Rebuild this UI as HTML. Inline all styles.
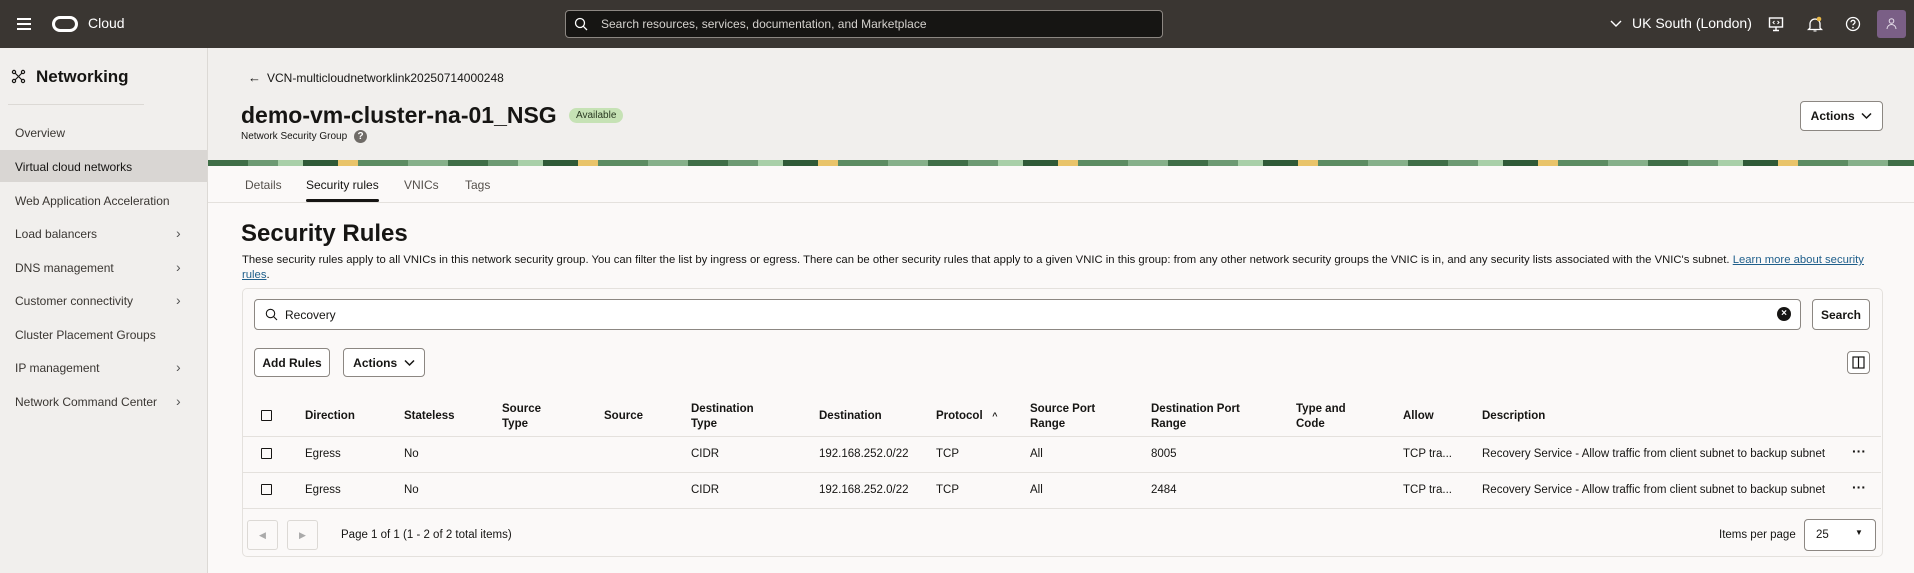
<!DOCTYPE html>
<html><head><meta charset="utf-8"><style>
*{box-sizing:border-box;margin:0;padding:0}
body{width:1914px;height:573px;overflow:hidden;font-family:"Liberation Sans",sans-serif;background:#f1efed;color:#161513;position:relative;font-size:12px}
.a{position:absolute;white-space:nowrap}
.top{left:0;top:0;width:1914px;height:48px;background:#3a3632}
.side{left:0;top:48px;width:208px;height:525px;background:#f1efed;border-right:1px solid #dcd9d5}
.nav{left:15px;font-size:12px;color:#3a3632}
.chev{left:176px;color:#555;font-size:14px}
.content{left:208px;top:166px;width:1706px;height:407px;background:#fbf9f8}
.btn{border:1px solid #8c8782;border-radius:4px;background:#fff;font-size:12px;font-weight:bold;display:flex;align-items:center;justify-content:center;color:#161513}
.th{font-size:11.5px;font-weight:bold;color:#161513;line-height:15px}
.td{font-size:11.5px;color:#161513}
.cb{width:11px;height:11px;border:1.3px solid #161513;border-radius:1px}
.hl{height:1px;background:#e4e1dd;left:243px;width:1638px}
</style></head><body>
<div class="a top"></div>
<div class="a" style="left:17px;top:18px;width:14px;height:2px;background:#fff;box-shadow:0 5px 0 #fff,0 10px 0 #fff"></div>
<div class="a" style="left:52px;top:16px;width:26px;height:16px;border:3px solid #fff;border-radius:8px"></div>
<div class="a" style="left:88px;top:15px;color:#fff;font-size:14px">Cloud</div>
<div class="a" style="left:565px;top:10px;width:598px;height:28px;background:#161513;border:1px solid #8c8782;border-radius:4px"></div>
<svg class="a" style="left:574px;top:17px" width="14" height="14" viewBox="0 0 14 14"><circle cx="6" cy="6" r="4.5" fill="none" stroke="#fff" stroke-width="1.3"/><path d="M9.3 9.3L13 13" stroke="#fff" stroke-width="1.3"/></svg>
<div class="a" style="left:601px;top:17px;color:#d5d2ce;font-size:12px">Search resources, services, documentation, and Marketplace</div>
<svg class="a" style="left:1610px;top:19px" width="12" height="10" viewBox="0 0 12 10"><path d="M1 2l5 5 5-5" fill="none" stroke="#fff" stroke-width="1.4"/></svg>
<div class="a" style="left:1632px;top:15px;color:#fff;font-size:14px">UK South (London)</div>
<svg class="a" style="left:1768px;top:16px" width="16" height="16" viewBox="0 0 16 16"><rect x="1.5" y="2" width="13" height="9" fill="none" stroke="#fff" stroke-width="1.4"/><path d="M8 11v3M5 14.5h6" stroke="#fff" stroke-width="1.4"/><path d="M6.5 5l-1.5 1.5 1.5 1.5M9.5 5l1.5 1.5-1.5 1.5" stroke="#fff" fill="none"/></svg>
<svg class="a" style="left:1807px;top:16px" width="16" height="17" viewBox="0 0 16 17"><path d="M3 12V8a5 5 0 0110 0v4l1.5 1.5h-13z" fill="none" stroke="#fff" stroke-width="1.3"/><path d="M6.5 15h3" stroke="#fff"/><circle cx="12" cy="3" r="2.3" fill="#e9b949"/></svg>
<svg class="a" style="left:1845px;top:16px" width="16" height="16" viewBox="0 0 16 16"><circle cx="8" cy="8" r="6.5" fill="none" stroke="#fff" stroke-width="1.3"/><path d="M6 6.3a2 2 0 114 0c0 1.4-2 1.5-2 3" fill="none" stroke="#fff" stroke-width="1.3"/><circle cx="8" cy="11.6" r=".8" fill="#fff"/></svg>
<div class="a" style="left:1877px;top:10px;width:29px;height:28px;background:#7a5f86;border-radius:3px"></div>
<svg class="a" style="left:1885px;top:17px" width="13" height="14" viewBox="0 0 13 14"><circle cx="6.5" cy="4" r="2.3" fill="none" stroke="#e8e0ec"/><path d="M2 12a4.5 4.5 0 019 0" fill="none" stroke="#e8e0ec"/></svg>

<div class="a side"></div>
<svg class="a" style="left:11px;top:69px" width="15" height="15" viewBox="0 0 15 15"><circle cx="3" cy="3" r="1.6" fill="none" stroke="#161513" stroke-width="1.2"/><circle cx="12" cy="3" r="1.6" fill="none" stroke="#161513" stroke-width="1.2"/><circle cx="3" cy="12" r="1.6" fill="none" stroke="#161513" stroke-width="1.2"/><circle cx="12" cy="12" r="1.6" fill="none" stroke="#161513" stroke-width="1.2"/><path d="M4 4l7 7M11 4l-7 7" stroke="#161513" stroke-width="1.2"/></svg>
<div class="a" style="left:36px;top:67px;font-size:17px;font-weight:bold">Networking</div>
<div class="a" style="left:8px;top:104px;width:136px;height:1px;background:#dcd9d5"></div>
<div class="a" style="left:0;top:150px;width:207px;height:32px;background:#d9d6d3"></div>
<div class="a nav" style="top:126px">Overview</div>
<div class="a nav" style="top:160px;color:#161513">Virtual cloud networks</div>
<div class="a nav" style="top:194px">Web Application Acceleration</div>
<div class="a nav" style="top:227px">Load balancers</div><div class="a chev" style="top:225px">›</div>
<div class="a nav" style="top:261px">DNS management</div><div class="a chev" style="top:259px">›</div>
<div class="a nav" style="top:294px">Customer connectivity</div><div class="a chev" style="top:292px">›</div>
<div class="a nav" style="top:328px">Cluster Placement Groups</div>
<div class="a nav" style="top:361px">IP management</div><div class="a chev" style="top:359px">›</div>
<div class="a nav" style="top:395px">Network Command Center</div><div class="a chev" style="top:393px">›</div>

<div class="a" style="left:248px;top:70px;font-size:13px">←</div>
<div class="a" style="left:267px;top:71px;font-size:12px">VCN-multicloudnetworklink20250714000248</div>
<div class="a" style="left:241px;top:102px;font-size:23px;font-weight:bold">demo-vm-cluster-na-01_NSG</div>
<div class="a" style="left:569px;top:108px;background:#c6e2b5;border-radius:8px;padding:2px 7px;font-size:10px;color:#2a3a22">Available</div>
<div class="a" style="left:241px;top:131px;font-size:10px">Network Security Group</div>
<div class="a" style="left:354px;top:130px;width:13px;height:13px;border-radius:50%;background:#6f6b67;color:#fff;font-size:10px;font-weight:bold;text-align:center;line-height:13px">?</div>
<div class="a btn" style="left:1800px;top:101px;width:83px;height:30px">Actions&nbsp;&nbsp;<svg width="11" height="8" viewBox="0 0 11 8"><path d="M1 1.5l4.5 4.5 4.5-4.5" fill="none" stroke="#161513" stroke-width="1.5"/></svg></div>

<div class="a" style="left:208px;top:160px;width:1706px;height:7px;background:repeating-linear-gradient(90deg,#3f6e47 0 40px,#6d9a73 40px 70px,#a8cfa8 70px 95px,#2f5a37 95px 130px,#e9c46a 130px 150px,#5c8c62 150px 200px,#86b08a 200px 240px)"></div>
<div class="a content"></div>
<div class="a" style="left:208px;top:202px;width:1706px;height:1px;background:#e4e1dd"></div>
<div class="a" style="left:245px;top:178px;font-size:12px;color:#55504b">Details</div>
<div class="a" style="left:306px;top:178px;font-size:12px">Security rules</div>
<div class="a" style="left:306px;top:199px;width:73px;height:3px;background:#161513;border-radius:2px"></div>
<div class="a" style="left:404px;top:178px;font-size:12px;color:#55504b">VNICs</div>
<div class="a" style="left:465px;top:178px;font-size:12px;color:#55504b">Tags</div>

<div class="a" style="left:241px;top:220px;font-size:24px;font-weight:bold">Security Rules</div>
<div class="a" style="left:242px;top:253px;font-size:11.3px;line-height:15px">These security rules apply to all VNICs in this network security group. You can filter the list by ingress or egress. There can be other security rules that apply to a given VNIC in this group: from any other network security groups the VNIC is in, and any security lists associated with the VNIC's subnet. <span style="color:#1f5f8b;text-decoration:underline">Learn more about security</span><br><span style="color:#1f5f8b;text-decoration:underline">rules</span>.</div>

<div class="a" style="left:242px;top:288px;width:1641px;height:269px;border:1px solid #e4e1dd;border-radius:5px;background:#fbf9f8"></div>
<div class="a" style="left:254px;top:299px;width:1547px;height:31px;border:1px solid #8c8782;border-radius:4px;background:#fff"></div>
<svg class="a" style="left:265px;top:308px" width="13" height="13" viewBox="0 0 13 13"><circle cx="5.5" cy="5.5" r="4.2" fill="none" stroke="#161513" stroke-width="1.1"/><path d="M8.5 8.5L12 12" stroke="#161513" stroke-width="1.1"/></svg>
<div class="a" style="left:285px;top:308px;font-size:12px">Recovery</div>
<div class="a" style="left:1777px;top:307px;width:14px;height:14px;border-radius:50%;background:#161513;color:#fff;font-size:10px;font-weight:bold;text-align:center;line-height:14px">×</div>
<div class="a btn" style="left:1812px;top:299px;width:58px;height:31px">Search</div>
<div class="a btn" style="left:254px;top:348px;width:76px;height:29px">Add Rules</div>
<div class="a btn" style="left:343px;top:348px;width:82px;height:29px">Actions&nbsp;&nbsp;<svg width="11" height="8" viewBox="0 0 11 8"><path d="M1 1.5l4.5 4.5 4.5-4.5" fill="none" stroke="#161513" stroke-width="1.5"/></svg></div>
<div class="a btn" style="left:1847px;top:351px;width:23px;height:23px"><svg width="13" height="13" viewBox="0 0 13 13"><rect x="1" y="1" width="11" height="11" fill="none" stroke="#161513" stroke-width="1.2"/><path d="M6.5 1v11" stroke="#161513" stroke-width="1.2"/></svg></div>

<div class="a cb" style="left:261px;top:410px"></div>
<div class="a th" style="left:305px;top:409px">Direction</div>
<div class="a th" style="left:404px;top:409px">Stateless</div>
<div class="a th" style="left:502px;top:402px">Source<br>Type</div>
<div class="a th" style="left:604px;top:409px">Source</div>
<div class="a th" style="left:691px;top:402px">Destination<br>Type</div>
<div class="a th" style="left:819px;top:409px">Destination</div>
<div class="a th" style="left:936px;top:409px">Protocol &nbsp;&nbsp;<span style="font-size:9px">^</span></div>
<div class="a th" style="left:1030px;top:402px">Source Port<br>Range</div>
<div class="a th" style="left:1151px;top:402px">Destination Port<br>Range</div>
<div class="a th" style="left:1296px;top:402px">Type and<br>Code</div>
<div class="a th" style="left:1403px;top:409px">Allow</div>
<div class="a th" style="left:1482px;top:409px">Description</div>
<div class="a hl" style="top:436px"></div>
<div class="a hl" style="top:472px"></div>
<div class="a hl" style="top:508px"></div>

<div class="a cb" style="left:261px;top:448px"></div>
<div class="a td" style="left:305px;top:448px">Egress</div><div class="a td" style="left:404px;top:448px">No</div><div class="a td" style="left:691px;top:448px">CIDR</div><div class="a td" style="left:819px;top:448px">192.168.252.0/22</div><div class="a td" style="left:936px;top:448px">TCP</div><div class="a td" style="left:1030px;top:448px">All</div><div class="a td" style="left:1151px;top:448px">8005</div><div class="a td" style="left:1403px;top:448px">TCP tra...</div><div class="a td" style="left:1482px;top:448px">Recovery Service - Allow traffic from client subnet to backup subnet</div><div class="a td" style="left:1852px;top:443px;font-weight:bold;font-size:14px">···</div>

<div class="a cb" style="left:261px;top:484px"></div>
<div class="a td" style="left:305px;top:484px">Egress</div><div class="a td" style="left:404px;top:484px">No</div><div class="a td" style="left:691px;top:484px">CIDR</div><div class="a td" style="left:819px;top:484px">192.168.252.0/22</div><div class="a td" style="left:936px;top:484px">TCP</div><div class="a td" style="left:1030px;top:484px">All</div><div class="a td" style="left:1151px;top:484px">2484</div><div class="a td" style="left:1403px;top:484px">TCP tra...</div><div class="a td" style="left:1482px;top:484px">Recovery Service - Allow traffic from client subnet to backup subnet</div><div class="a td" style="left:1852px;top:479px;font-weight:bold;font-size:14px">···</div>

<div class="a" style="left:247px;top:520px;width:31px;height:30px;border:1px solid #dcd9d5;border-radius:3px;color:#aaa;font-size:9px;text-align:center;line-height:28px">◀</div>
<div class="a" style="left:287px;top:520px;width:31px;height:30px;border:1px solid #dcd9d5;border-radius:3px;color:#aaa;font-size:9px;text-align:center;line-height:28px">▶</div>
<div class="a td" style="left:341px;top:529px">Page 1 of 1 (1 - 2 of 2 total items)</div>
<div class="a td" style="left:1719px;top:529px">Items per page</div>
<div class="a" style="left:1804px;top:519px;width:72px;height:32px;border:1px solid #8c8782;border-radius:4px;background:#fff"></div>
<div class="a td" style="left:1816px;top:529px">25</div>
<div class="a" style="left:1855px;top:528px;font-size:8px">▼</div>
</body></html>
